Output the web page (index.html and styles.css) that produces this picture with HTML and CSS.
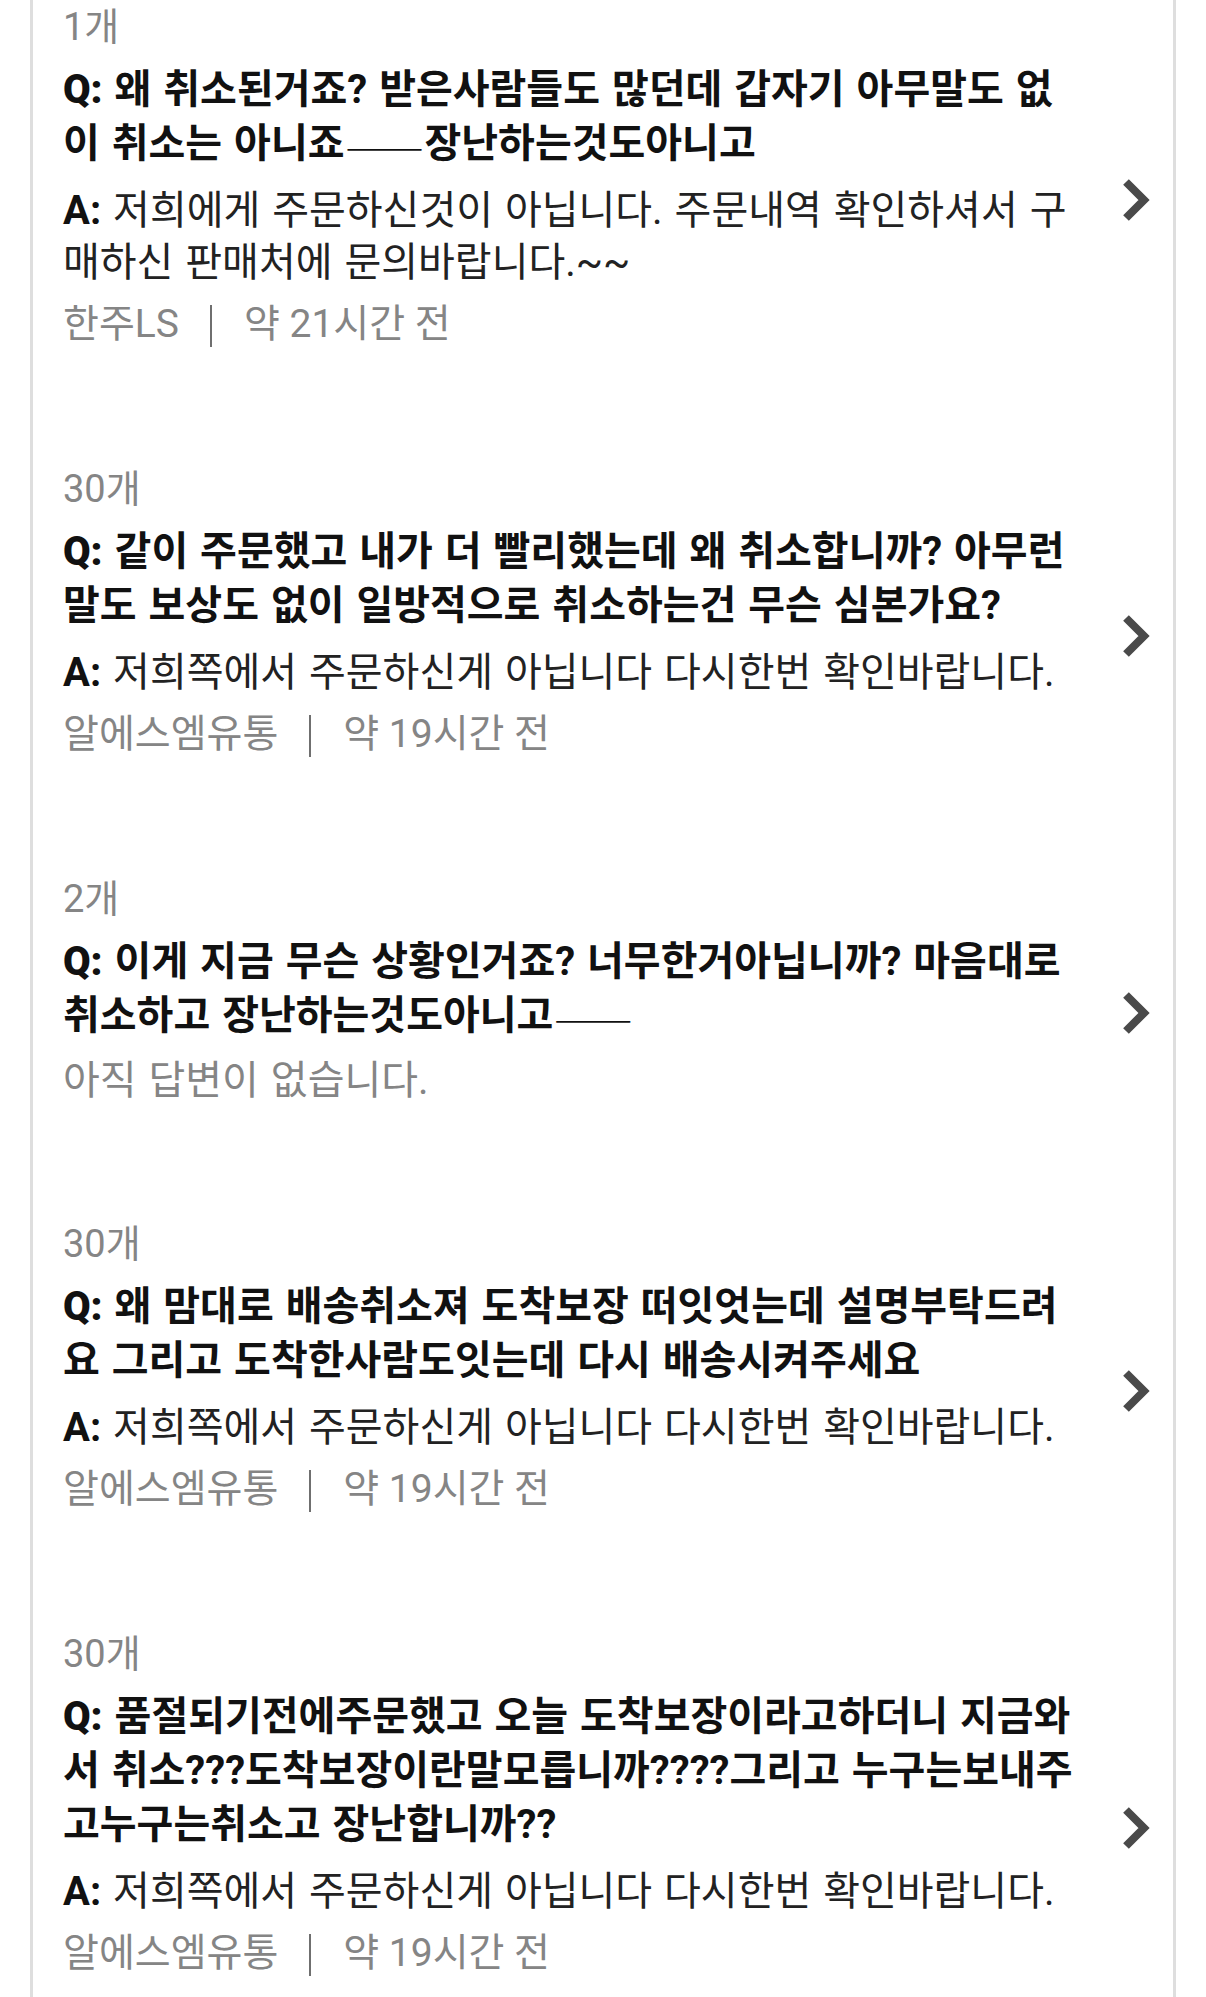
FILE: index.html
```html
<!DOCTYPE html>
<html lang="ko">
<head>
  <meta charset="UTF-8" />
  <meta name="viewport" content="width=device-width, initial-scale=1.0" />
  <title>상품문의</title>
  <link rel="stylesheet" href="styles.css">
</head>
<body>
  <div id="qna-list">

    <div class="qna-item">
      <p class="qna-count">1개</p>
      <a class="qna-row" href="#">
        <div class="qna-body">
          <p class="qna-q"><b>Q:</b> 왜 취소된거죠? 받은사람들도 많던데 갑자기 아무말도 없이 취소는 아니죠<span class="dash">——</span>장난하는것도아니고</p>
          <p class="qna-a"><b>A:</b> 저희에게 주문하신것이 아닙니다. 주문내역 확인하셔서 구매하신 판매처에 문의바랍니다.~~</p>
          <p class="qna-meta"><span>한주LS</span><span class="sep"></span><span>약 21시간 전</span></p>
        </div>
        <svg class="chevron" viewBox="0 0 28 44"><polyline points="4,4 22,22 4,40" /></svg>
      </a>
    </div>

    <div class="qna-item">
      <p class="qna-count">30개</p>
      <a class="qna-row" href="#">
        <div class="qna-body">
          <p class="qna-q"><b>Q:</b> 같이 주문했고 내가 더 빨리했는데 왜 취소합니까? 아무런 말도 보상도 없이 일방적으로 취소하는건 무슨 심본가요?</p>
          <p class="qna-a"><b>A:</b> 저희쪽에서 주문하신게 아닙니다 다시한번 확인바랍니다.</p>
          <p class="qna-meta"><span>알에스엠유통</span><span class="sep"></span><span>약 19시간 전</span></p>
        </div>
        <svg class="chevron" viewBox="0 0 28 44"><polyline points="4,4 22,22 4,40" /></svg>
      </a>
    </div>

    <div class="qna-item">
      <p class="qna-count">2개</p>
      <a class="qna-row" href="#">
        <div class="qna-body">
          <p class="qna-q"><b>Q:</b> 이게 지금 무슨 상황인거죠? 너무한거아닙니까? 마음대로 취소하고 장난하는것도아니고<span class="dash">——</span></p>
          <p class="qna-a empty">아직 답변이 없습니다.</p>
        </div>
        <svg class="chevron" viewBox="0 0 28 44"><polyline points="4,4 22,22 4,40" /></svg>
      </a>
    </div>

    <div class="qna-item">
      <p class="qna-count">30개</p>
      <a class="qna-row" href="#">
        <div class="qna-body">
          <p class="qna-q"><b>Q:</b> 왜 맘대로 배송취소져 도착보장 떠잇엇는데 설명부탁드려요 그리고 도착한사람도잇는데 다시 배송시켜주세요</p>
          <p class="qna-a"><b>A:</b> 저희쪽에서 주문하신게 아닙니다 다시한번 확인바랍니다.</p>
          <p class="qna-meta"><span>알에스엠유통</span><span class="sep"></span><span>약 19시간 전</span></p>
        </div>
        <svg class="chevron" viewBox="0 0 28 44"><polyline points="4,4 22,22 4,40" /></svg>
      </a>
    </div>

    <div class="qna-item">
      <p class="qna-count">30개</p>
      <a class="qna-row" href="#">
        <div class="qna-body">
          <p class="qna-q"><b>Q:</b> 품절되기전에주문했고 오늘 도착보장이라고하더니 지금와서 취소???도착보장이란말모릅니까????그리고 누구는보내주고누구는취소고 장난합니까??</p>
          <p class="qna-a"><b>A:</b> 저희쪽에서 주문하신게 아닙니다 다시한번 확인바랍니다.</p>
          <p class="qna-meta"><span>알에스엠유통</span><span class="sep"></span><span>약 19시간 전</span></p>
        </div>
        <svg class="chevron" viewBox="0 0 28 44"><polyline points="4,4 22,22 4,40" /></svg>
      </a>
    </div>

  </div>
</body>
</html>
```

FILE: styles.css
```css
:root {
  --text: #111111;
  --answer: #222222;
  --muted: #858585;
  --line: #dedede;
}

* {
  box-sizing: border-box;
  margin: 0;
  padding: 0;
  font-family: Roboto, 'Noto Sans CJK KR', sans-serif;
}

body {
  background: #ffffff;
  color: var(--text);
}

#qna-list {
  margin: 0 30px;
  padding-top: 3px;
  min-height: 100vh;
  border-left: 3px solid var(--line);
  border-right: 3px solid var(--line);
  background: #ffffff;
}

.qna-item {
  padding: 0 0 117px 30px;
}

.qna-count {
  font-size: 38px;
  line-height: 48px;
  color: var(--muted);
}

.qna-row {
  display: flex;
  align-items: center;
  color: inherit;
  text-decoration: none;
}

.qna-body {
  width: 1018px;
}

.qna-q {
  font-size: 40px;
  line-height: 54px;
  font-weight: 700;
  word-spacing: 2px;
  margin-top: 12px;
}

/* full-width dashes joined into one low, unbroken line */
.qna-q .dash {
  font-family: 'Noto Sans CJK KR', sans-serif;
  font-weight: 700;
  line-height: 0;
  letter-spacing: -8px;
  padding-right: 8px;
  vertical-align: -8px;
}

.qna-a {
  font-size: 40px;
  line-height: 52px;
  word-spacing: 2px;
  color: var(--answer);
  margin: 14px 0 2px;
}

.qna-a b {
  color: var(--text);
}

.qna-a.empty {
  color: var(--muted);
  line-height: 44px;
  margin: 16px 0 0;
}

.qna-meta {
  display: flex;
  align-items: center;
  font-size: 39px;
  line-height: 48px;
  color: var(--muted);
  margin-top: 11px;
}

.qna-meta .sep {
  width: 2px;
  height: 42px;
  margin: 4px 32px 0 31px;
  background: #6f6f6f;
}

.chevron {
  width: 28px;
  height: 44px;
  margin: 0 23px 0 41px;
  fill: none;
  stroke: #4a4a4a;
  stroke-width: 8;
  stroke-linejoin: miter;
}
```
